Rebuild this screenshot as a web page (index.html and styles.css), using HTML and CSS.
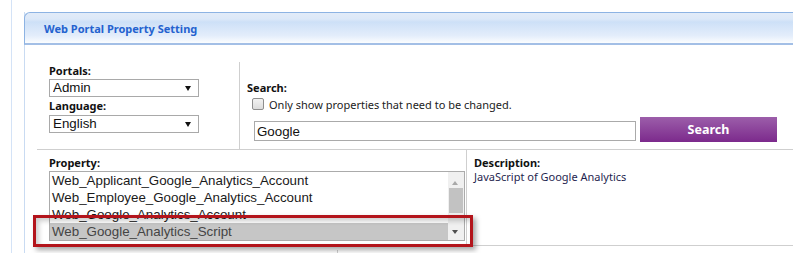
FILE: index.html
```html
<!DOCTYPE html>
<html lang="en">
<head>
    <meta charset="UTF-8">
    <title>Web Portal Property Setting</title>
    <link rel="stylesheet" href="styles.css">
</head>
<body>

    <div class="page">
        <div class="panel">
            <!-- Panel title bar -->
            <div class="panel-head">Web Portal Property Setting</div>

            <!-- Filters -->
            <div class="top">
                <div class="col-portal">
                    <div class="field-label">Portals:</div>
                    <span class="select-wrap">
                        <select class="select">
                            <option>Admin</option>
                        </select>
                    </span>
                    <div class="field-label second">Language:</div>
                    <span class="select-wrap">
                        <select class="select">
                            <option>English</option>
                        </select>
                    </span>
                </div>

                <div class="col-search">
                    <div class="field-label">Search:</div>
                    <label class="check-row">
                        <span class="checkbox"></span>
                        Only show properties that need to be changed.
                    </label>
                    <div class="search-row">
                        <input class="search-input" type="text" value="Google">
                        <button class="search-btn">Search</button>
                    </div>
                </div>
            </div>

            <!-- Property list + description -->
            <div class="bottom">
                <div class="col-property">
                    <div class="field-label">Property:</div>
                    <div class="listbox">
                        <div class="list-rows">
                            <div class="list-row">Web_Applicant_Google_Analytics_Account</div>
                            <div class="list-row">Web_Employee_Google_Analytics_Account</div>
                            <div class="list-row">Web_Google_Analytics_Account</div>
                            <div class="list-row selected">Web_Google_Analytics_Script</div>
                        </div>
                        <div class="scrollbar">
                            <span class="arrow up"></span>
                            <span class="thumb"></span>
                            <span class="arrow down"></span>
                        </div>
                    </div>
                </div>
                <div class="col-desc">
                    <div class="field-label">Description:</div>
                    <div class="desc-text">JavaScript of Google Analytics</div>
                </div>
            </div>
            <div class="foot"><span class="foot-tick"></span></div>

            <!-- Highlight annotation over the selected row -->
            <div class="highlight"></div>
        </div>
    </div>

</body>
</html>
```

FILE: styles.css
```css
/* General */
* {
    box-sizing: border-box;
}

body {
    margin: 0;
    background-color: #fff;
    font-family: 'Noto Sans', sans-serif;
    overflow: hidden;
}

.page {
    margin-left: 11px;
    border-left: 1px solid #d4e3f7;
    padding: 12px 0 0 12px;
    height: 253px;
}

/* Panel */
.panel {
    position: relative;
    border-left: 1px solid #c9dbf2;
    margin-right: -20px;
}

.panel-head {
    height: 33px;
    margin-left: -1px;
    padding-left: 19px;
    border-top: 1px solid #8db3e3;
    border-left: 1px solid #8db3e3;
    border-bottom: 2px solid #a3bfe6;
    border-top-left-radius: 6px;
    background: linear-gradient(#e2ebf8 0%, #dce8f8 20%, #cde0f7 30%, #e3edfb 75%, #fbfdff 100%);
    line-height: 31px;
    font-size: 11px;
    font-weight: 700;
    color: #2462cf;
}

.field-label {
    font-size: 11px;
    font-weight: 700;
    line-height: 14px;
    color: #111;
}

/* Top filters */
.top {
    display: flex;
    padding-top: 17px;
}

.col-portal {
    width: 214px;
    height: 87px;
    padding: 2px 0 0 24px;
}

.col-portal .field-label {
    margin-bottom: 1px;
}

.col-portal .second {
    margin-top: 2px;
    margin-bottom: 2px;
}

.select-wrap {
    position: relative;
    display: block;
    width: 150px;
}

.select-wrap::after {
    content: '';
    position: absolute;
    right: 8px;
    top: 7px;
    border-left: 3px solid transparent;
    border-right: 3px solid transparent;
    border-top: 5px solid #111;
}

.select {
    appearance: none;
    -webkit-appearance: none;
    display: block;
    width: 150px;
    height: 18px;
    margin: 0;
    padding: 0 3px;
    border: 1px solid #a9a9a9;
    border-radius: 0;
    background: #fff;
    font-family: 'Liberation Sans', Arial, sans-serif;
    font-size: 13.33px;
    line-height: 16px;
    color: #111;
}

.col-search {
    flex: 1;
    height: 87px;
    border-left: 1px solid #cfcfcf;
    padding: 19px 0 0 7px;
}

.check-row {
    display: flex;
    align-items: center;
    height: 16px;
    margin-top: 1px;
    padding-left: 5px;
    font-size: 11px;
    color: #222;
}

.checkbox {
    width: 12px;
    height: 12px;
    margin-right: 5px;
    border: 1px solid #8e8e8e;
    border-radius: 2px;
    background: linear-gradient(#f2f2f2, #dcdcdc);
}

.search-row {
    display: flex;
    align-items: flex-end;
    margin-top: 5px;
    padding-left: 7px;
}

.search-input {
    width: 382px;
    height: 20px;
    margin: 0 4px 1px 0;
    padding: 0 2px;
    border: 1px solid #aaa;
    font-family: 'Liberation Sans', Arial, sans-serif;
    font-size: 13.33px;
    color: #111;
    outline: none;
}

.search-btn {
    width: 137px;
    height: 25px;
    padding: 0;
    border: none;
    background: linear-gradient(#9c5eaa, #7c2a8c);
    font-family: 'Noto Sans', sans-serif;
    font-size: 12.5px;
    font-weight: 700;
    color: #fff;
}

/* Bottom: property list and description */
.bottom {
    display: flex;
    margin-left: 12px;
    border-top: 1px solid #cfcfcf;
    border-bottom: 1px solid #cfcfcf;
    height: 97px;
}

.col-property {
    width: 430px;
    padding: 6px 0 0 12px;
    border-right: 1px solid #cfcfcf;
}

.col-property .field-label {
    margin-bottom: 1px;
}

.listbox {
    display: flex;
    width: 416px;
    height: 70px;
    border: 1px solid #ababab;
    background: #fff;
}

.list-rows {
    flex: 1;
}

.list-row {
    height: 17px;
    padding-left: 2px;
    font-family: 'Liberation Sans', Arial, sans-serif;
    font-size: 13.33px;
    line-height: 17px;
    color: #1a1a1a;
    white-space: nowrap;
}

.list-row.selected {
    background-color: #c6c6c6;
    color: #444;
}

.scrollbar {
    position: relative;
    width: 16px;
    background-color: #f0f0f0;
}

.arrow {
    position: absolute;
    left: 4px;
    border-left: 3.5px solid transparent;
    border-right: 3.5px solid transparent;
}

.arrow.up {
    top: 9px;
    border-bottom: 4px solid #a8a8a8;
}

.arrow.down {
    top: 58px;
    border-top: 4px solid #505050;
}

.thumb {
    position: absolute;
    left: 1px;
    top: 16px;
    width: 14px;
    height: 25px;
    background-color: #c2c2c2;
}

.col-desc {
    padding: 6px 0 0 7px;
}

.desc-text {
    font-size: 11px;
    line-height: 14px;
    color: #1f1f4f;
}

.foot {
    height: 8px;
    padding-left: 312px;
}

.foot-tick {
    display: block;
    width: 1px;
    height: 8px;
    margin-top: 4px;
    background-color: #cfcfcf;
}

/* Red annotation box */
.highlight {
    position: absolute;
    left: 8px;
    top: 203px;
    width: 440px;
    height: 32px;
    border: 3px solid #b3141b;
    box-shadow: 3px 3px 5px rgba(0, 0, 0, 0.35), inset 3px 3px 5px rgba(0, 0, 0, 0.2);
}
```
